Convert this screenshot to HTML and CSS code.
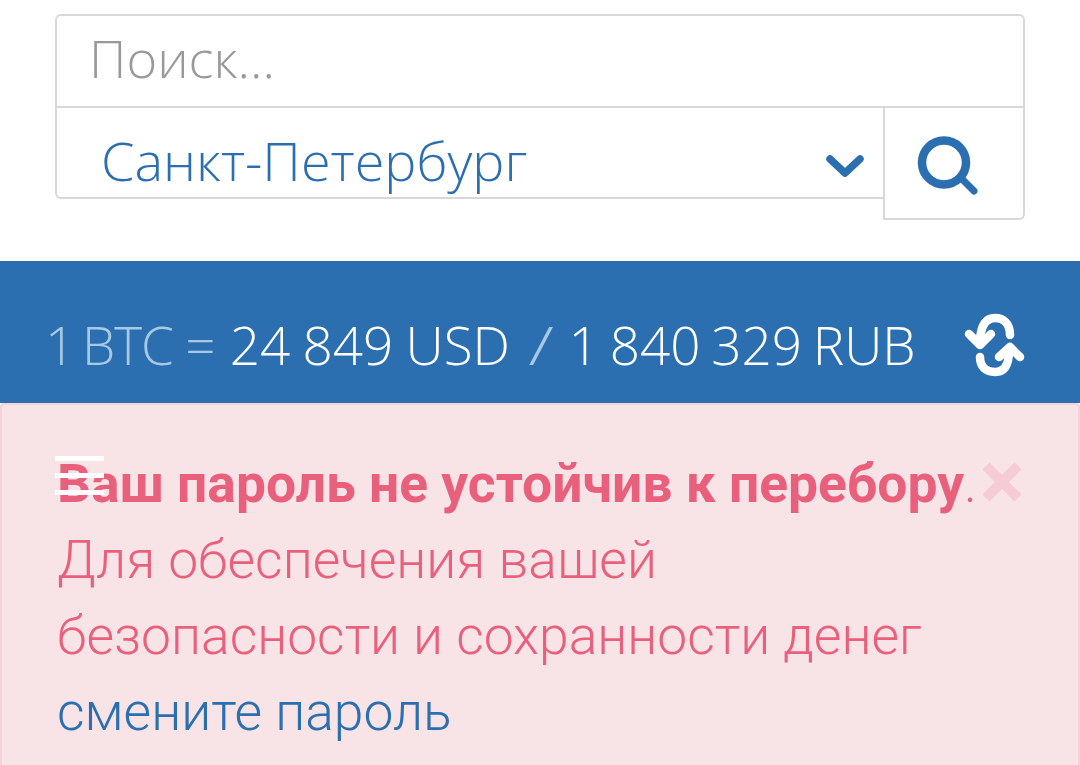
FILE: index.html

```html
<!DOCTYPE html>
<html lang="ru">
<head>
  <meta charset="UTF-8" />
  <title>Поиск</title>
  <link rel="stylesheet" href="styles.css">
</head>
<body>

  <form class="search">
    <div class="search-input">Поиск...</div>
    <div class="search-row">
      <div class="city">
        <span>Санкт-Петербург</span>
        <svg class="chevron" width="40" height="26" viewBox="0 0 40 26">
          <path d="M4 5 L19 19 L34 5" fill="none" stroke="#2b6fb0" stroke-width="7.5" stroke-linecap="round" stroke-linejoin="round"/>
        </svg>
      </div>
      <div class="search-btn">
        <svg width="76" height="76" viewBox="0 0 76 76">
          <circle cx="28" cy="37.5" r="22" fill="none" stroke="#2b6fb0" stroke-width="8.5"/>
          <path d="M46 54 L58 66" fill="none" stroke="#2b6fb0" stroke-width="7" stroke-linecap="round"/>
        </svg>
      </div>
    </div>
  </form>

  <div class="rate">
    <div class="rate-text">
      <span class="dim eq"><span class="btc">1 BTC</span> =</span> 24 849 USD <span class="dim slash">/</span> <span class="rub">1 840 329 RUB</span>
    </div>
    <svg class="refresh" width="70" height="70" viewBox="0 0 70 70">
      <g fill="none" stroke="#fff" stroke-width="8.5" stroke-linecap="round" stroke-linejoin="round">
        <path d="M50 25 C50 13 43 8 35 8 C27 8 21 14 20 30"/>
        <path d="M9 24 L20 35 L31 24"/>
        <path d="M20 47 C20 57 26 62 35 62 C44 62 49 56 49 40"/>
        <path d="M39 47 L50 37 L60 47"/>
      </g>
    </svg>
  </div>

  <div class="alert">
    <div class="burger"><i></i><i></i><i></i></div>
    <svg class="close" width="40" height="40" viewBox="0 0 40 40">
      <path d="M4 4 L36 36 M36 4 L4 36" stroke="#f5ccd6" stroke-width="10"/>
    </svg>
    <p><strong>Ваш пароль не устойчив к перебору</strong>.</p>
    <p>Для обеспечения вашей</p>
    <p>безопасности и сохранности денег</p>
    <p><a href="#">смените пароль</a></p>
  </div>

</body>
</html>
```

FILE: styles.css

```css
:root {
  --blue: #2b6fb0;
  --line: #d8d8d8;
  --alert-bg: #f8e3e7;
  --alert-text: #e9607c;
}

* {
  box-sizing: border-box;
  margin: 0;
  padding: 0;
}

html, body {
  height: 765px;
  overflow: hidden;
}

body {
  background: #fff;
  font-family: "Open Sans", sans-serif;
  padding-top: 14px;
}

.search {
  width: 970px;
  height: 205px;
  margin-left: 55px;
  margin-bottom: 42px;
}

.search-input {
  height: 94px;
  border: 2px solid var(--line);
  border-radius: 6px 6px 0 0;
  padding: 8px 0 0 32px;
  font-size: 52.4px;
  font-weight: 300;
  line-height: 68px;
  color: #999;
}

.search-row {
  display: flex;
  align-items: flex-start;
  margin-top: -1px;
}

.city {
  flex: 1;
  height: 92px;
  display: flex;
  align-items: center;
  justify-content: space-between;
  border: 2px solid var(--line);
  border-top: 0;
  border-right: 0;
  border-radius: 0 0 0 6px;
  padding: 16px 17px 0 44px;
  font-size: 54px;
  font-weight: 300;
  color: var(--blue);
}

.chevron {
  margin-top: 14px;
}

.search-btn {
  width: 142px;
  height: 113px;
  display: flex;
  align-items: center;
  justify-content: center;
  border: 2px solid var(--line);
  border-top: 0;
  border-radius: 0 0 6px 0;
}

.rate {
  height: 142px;
  background: var(--blue);
  display: flex;
  align-items: center;
  justify-content: space-between;
  padding: 25px 50px 0 45px;
  color: #fff;
}

.rate-text {
  font-size: 53px;
  font-weight: 300;
  line-height: 72px;
  word-spacing: -1.5px;
  white-space: nowrap;
}

.refresh {
  margin-top: 1px;
}

.dim {
  color: #a9c8e6;
}

.eq {
  margin-right: 2px;
}

.btc {
  letter-spacing: -1px;
  word-spacing: -5px;
}

.slash {
  display: inline-block;
  margin: 0 6px 0 10px;
  transform: scaleX(1.4);
}

.rub {
  word-spacing: -3px;
}

.alert {
  position: relative;
  height: 362px;
  background: var(--alert-bg);
  border: 2px solid #f5d3da;
  border-bottom: 0;
  border-radius: 4px 4px 0 0;
  padding: 41px 0 0 55px;
  font-family: Roboto, sans-serif;
  font-size: 53.4px;
  font-weight: 300;
  line-height: 76px;
  color: var(--alert-text);
}

.alert strong {
  font-weight: 700;
}

.alert a {
  color: var(--blue);
  text-decoration: none;
}

.burger {
  position: absolute;
  left: 53px;
  top: 51px;
  width: 49px;
  display: flex;
  flex-direction: column;
  gap: 12px;
}

.burger i {
  display: block;
  height: 5px;
  background: #fff;
}

.close {
  position: absolute;
  right: 56px;
  top: 57px;
}
```
